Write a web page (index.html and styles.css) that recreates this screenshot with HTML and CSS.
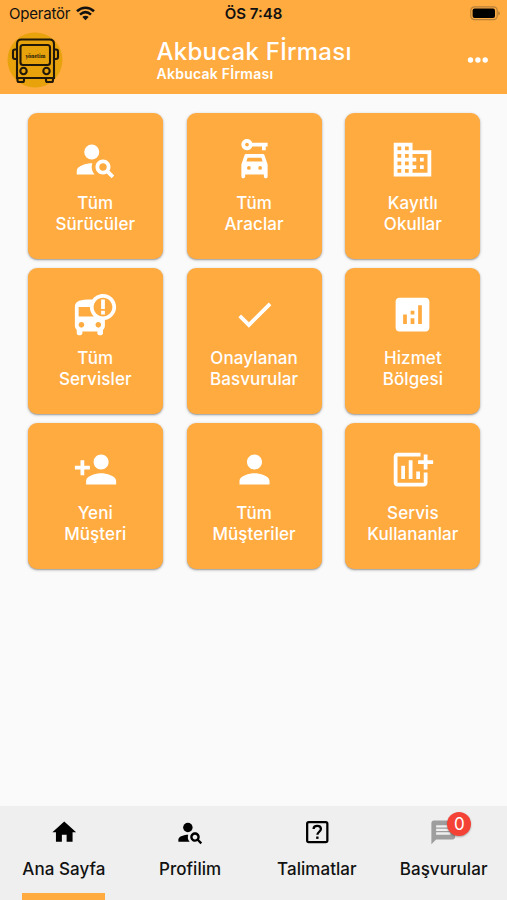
FILE: index.html
```html
<!DOCTYPE html>
<html lang="tr">
<head>
<meta charset="utf-8">
<title>Akbucak Fİrması</title>
<link rel="stylesheet" href="styles.css">
</head>
<body>
<div class="app">
  <header class="top">
    <div class="status">
      <div class="carrier">Operatör
        <svg width="19" height="15" viewBox="0 0 19 15" fill="none" stroke="#111" stroke-width="2.6"><path d="M1 5.2C6 .6 13 .6 18 5.2"/><path d="M4 8.6c3.400-3 7.600-3 11 0"/><path d="M9.500 14.200L6.300 11c1.900-1.700 4.500-1.700 6.400 0z" fill="#111" stroke="none"/></svg>
      </div>
      <div class="clock">ÖS 7:48</div>
      <svg class="battery" width="31" height="15" viewBox="0 0 31 15"><rect x=".8" y=".8" width="26.400" height="12.800" rx="3.600" fill="none" stroke="#b8813a" stroke-width="1.200"/><rect x="2.600" y="2.500" width="22.400" height="9.400" rx="2" fill="#000"/><path d="M28.400 5v4.600c1.900-.8 1.900-3.800 0-4.600z" fill="#a8752f"/></svg>
    </div>
    <div class="bar">
      <svg class="logo" width="56" height="56" viewBox="0 0 56 56">
        <circle cx="28" cy="28" r="27.500" fill="#e8a20c"/>
        <g fill="none" stroke="#21180a" stroke-width="2.1">
          <path d="M10 46V12q0-4.500 4.500-4.500h28q4.500 0 4.500 4.500v34z"/>
          <rect x="13.500" y="13" width="29.500" height="20" rx="2.500"/>
          <path d="M9.500 17.500H8q-2 0-2 2v5.500q0 2 2 2h1.500M47 17.500h2q2 0 2 2v5.500q0 2-2 2h-2"/>
          <circle cx="16.500" cy="39" r="3.200"/><circle cx="39.500" cy="39" r="3.200"/>
          <path d="M10.500 46v2.500q0 1.500 1.500 1.500h3.500q1.500 0 1.500-1.500v-2.500M39 46v2.500q0 1.500 1.500 1.500h4q1.500 0 1.500-1.500v-2.500"/>
        </g>
        <text x="28.500" y="25.500" text-anchor="middle" textLength="20" lengthAdjust="spacingAndGlyphs" class="logo-text">yönetim</text>
      </svg>
      <div class="titles">
        <h1>Akbucak Fİrması</h1>
        <p>Akbucak Fİrması</p>
      </div>
      <svg class="more" width="22" height="8" viewBox="0 0 22 8" fill="#fff"><circle cx="3.500" cy="4" r="2.700"/><circle cx="10.900" cy="4" r="2.700"/><circle cx="18.200" cy="4" r="2.700"/></svg>
    </div>
  </header>

  <main class="grid">
    <a class="card"><svg viewBox="0 0 24 24"><circle cx="10" cy="8" r="4"/><path d="M10.350 14.010C7.620 13.910 2 15.270 2 18v2h9.540c-2.470-2.760-1.230-5.890-1.190-5.990z"/><path d="M19.430 18.020c.36-.59.57-1.280.57-2.020 0-2.210-1.790-4-4-4s-4 1.790-4 4 1.790 4 4 4c.74 0 1.430-.22 2.020-.57L20.590 22 22 20.590l-2.570-2.570zM16 18c-1.100 0-2-.9-2-2s.9-2 2-2 2 .9 2 2-.9 2-2 2z"/></svg><span>Tüm<br>Sürücüler</span></a>
    <a class="card"><svg viewBox="0 0 24 24" fill-rule="evenodd"><path d="M10.830 3C10.410 1.830 9.300 1 8 1 6.340 1 5 2.340 5 4s1.340 3 3 3c1.300 0 2.410-.84 2.830-2H16v2h2V5h1V3zM8 5c-.55 0-1-.45-1-1s.45-1 1-1 1 .45 1 1-.45 1-1 1z"/><path d="M16.390 9H7.610c-.43 0-.81.28-.95.68L5 14.690V21c0 .55.45 1 1 1s1-.45 1-1v-1h10v1c0 .55.45 1 1 1s1-.45 1-1v-6.310l-1.660-5.010c-.14-.4-.52-.68-.95-.68zM7.670 13l.66-2h7.340l.66 2zM9 15.500a1 1 0 1 1 0 2 1 1 0 0 1 0-2zM15 15.500a1 1 0 1 1 0 2 1 1 0 0 1 0-2z"/></svg><span>Tüm<br>Araclar</span></a>
    <a class="card"><svg viewBox="0 0 24 24"><path d="M12 7V3H2v18h20V7H12zM6 19H4v-2h2v2zm0-4H4v-2h2v2zm0-4H4V9h2v2zm0-4H4V5h2v2zm4 12H8v-2h2v2zm0-4H8v-2h2v2zm0-4H8V9h2v2zm0-4H8V5h2v2zm10 12h-8v-2h2v-2h-2v-2h2v-2h-2V9h8v10zm-2-8h-2v2h2v-2zm0 4h-2v2h2v-2z"/></svg><span>Kayıtlı<br>Okullar</span></a>
    <a class="card"><svg viewBox="0 0 24 24" fill-rule="evenodd"><path d="M16 1c-2.400 0-4.520 1.210-5.760 3.020C9.840 4 9.420 4 9 4c-4.420 0-8 .5-8 4v10c0 .88.39 1.670 1 2.220V22c0 .55.45 1 1 1h1c.55 0 1-.45 1-1v-1h8v1c0 .55.45 1 1 1h1c.55 0 1-.45 1-1v-1.780c.61-.55 1-1.340 1-2.220v-3.080c3.390-.49 6-3.390 6-6.920 0-3.870-3.130-7-7-7zM4.500 19c-.83 0-1.500-.67-1.500-1.500S3.670 16 4.500 16s1.500.67 1.500 1.500S5.330 19 4.500 19zM3 13V8h6c0 1.960.81 3.730 2.110 5zM13.500 19c-.83 0-1.500-.67-1.500-1.500s.67-1.500 1.500-1.500 1.500.67 1.500 1.500-.67 1.500-1.500 1.500zM16 13c-2.760 0-5-2.240-5-5s2.240-5 5-5 5 2.240 5 5-2.240 5-5 5z"/><path d="M15 4h2v5h-2zM15 10h2v2h-2z"/></svg><span>Tüm<br>Servisler</span></a>
    <a class="card"><svg viewBox="0 0 24 24"><path d="M9 16.170L4.830 12l-1.420 1.410L9 19 21 7l-1.410-1.410z"/></svg><span>Onaylanan<br>Basvurular</span></a>
    <a class="card"><svg viewBox="0 0 24 24"><path d="M19 3H5c-1.100 0-2 .9-2 2v14c0 1.100.9 2 2 2h14c1.100 0 2-.9 2-2V5c0-1.100-.9-2-2-2zM9 17H7v-5h2v5zm4 0h-2v-3h2v3zm0-5h-2v-2h2v2zm4 5h-2V7h2v10z"/></svg><span>Hizmet<br>Bölgesi</span></a>
    <a class="card"><svg viewBox="0 0 24 24"><path d="M15 12c2.210 0 4-1.790 4-4s-1.790-4-4-4-4 1.790-4 4 1.790 4 4 4zm-9-2V7H4v3H1v2h3v3h2v-3h3v-2H6zm9 4c-2.670 0-8 1.340-8 4v2h16v-2c0-2.660-5.330-4-8-4z"/></svg><span>Yeni<br>Müşteri</span></a>
    <a class="card"><svg viewBox="0 0 24 24"><path d="M12 12c2.210 0 4-1.790 4-4s-1.790-4-4-4-4 1.790-4 4 1.790 4 4 4zm0 2c-2.670 0-8 1.340-8 4v2h16v-2c0-2.660-5.330-4-8-4z"/></svg><span>Tüm<br>Müşteriler</span></a>
    <a class="card"><svg viewBox="1 0 24 24"><path d="M17.300 3H5c-1.100 0-2 .9-2 2v14c0 1.100.9 2 2 2h14c1.100 0 2-.9 2-2v-5.400h-2V19H5V5h12.300zM7 10h2v7H7zM11 7h2v10h-2zM15 13h2v4h-2zM24 7v2h-3v3h-2V9h-3V7h3V4h2v3z"/></svg><span>Servis<br>Kullananlar</span></a>
  </main>

  <nav class="tabs">
    <a class="tab active"><svg viewBox="0 0 24 24"><path d="M10 20v-6h4v6h5v-8h3L12 3 2 12h3v8z"/></svg><span>Ana Sayfa</span></a>
    <a class="tab"><svg viewBox="0 0 24 24"><circle cx="10" cy="8" r="4"/><path d="M10.350 14.010C7.620 13.910 2 15.270 2 18v2h9.540c-2.470-2.760-1.230-5.890-1.190-5.990z"/><path d="M19.430 18.020c.36-.59.57-1.280.57-2.020 0-2.210-1.790-4-4-4s-4 1.790-4 4 1.790 4 4 4c.74 0 1.430-.22 2.020-.57L20.590 22 22 20.590l-2.570-2.570zM16 18c-1.100 0-2-.9-2-2s.9-2 2-2 2 .9 2 2-.9 2-2 2z"/></svg><span>Profilim</span></a>
    <a class="tab"><svg viewBox="0 0 24 24"><rect x="3.500" y="3.400" width="17" height="17" rx="1.400" fill="none" stroke="#000" stroke-width="1.900"/><path d="M8.900 9.300C9 5.700 15.100 5.900 15.100 9.300c0 2.100-3 2.500-3 4.900" fill="none" stroke="#000" stroke-width="1.900"/><rect x="11.100" y="15.600" width="2" height="2"/></svg><span>Talimatlar</span></a>
    <a class="tab"><div class="badged"><svg class="muted" viewBox="0 0 24 24"><path d="M20 2H4c-1.100 0-1.990.9-1.990 2L2 22l4-4h14c1.100 0 2-.9 2-2V4c0-1.100-.9-2-2-2zm-2 12H6v-2h12v2zm0-3H6V9h12v2zm0-3H6V6h12v2z"/></svg><b class="badge">0</b></div><span>Başvurular</span></a>
  </nav>
</div>
</body>
</html>
```
FILE: styles.css
```css
* { box-sizing: border-box; }
body {
  margin: 0;
  font-family: Inter, "Liberation Sans", sans-serif;
  background: #fafafa;
}
svg { display: block; flex: none; }
.app {
  width: 507px;
  height: 900px;
  display: flex;
  flex-direction: column;
  overflow: hidden;
}
.top { height: 94px; background: #ffab40; }
.status {
  height: 27px;
  display: grid;
  grid-template-columns: 1fr auto 1fr;
  align-items: center;
  padding: 0 6px 0 9px;
  color: #111;
  font-size: 15px;
}
.carrier { display: flex; align-items: center; gap: 6px; letter-spacing: -.2px; }
.clock { font-weight: 600; margin-left: -3px; }
.battery { justify-self: end; }
.bar {
  height: 67px;
  display: flex;
  align-items: center;
  padding: 0 18px 2px 7px;
}
.logo-text { font: 700 6px "DejaVu Serif", serif; fill: #21180a; }
.titles { flex: 1; margin-left: 93.500px; color: #fff; white-space: nowrap; }
h1 { margin: 1px 0 0; font-size: 24px; line-height: 28px; font-weight: 500; letter-spacing: .25px; }
p { margin: -1px 0 1px; font-size: 14px; line-height: 17px; font-weight: 600; letter-spacing: .25px; }
.grid {
  flex: 1;
  display: grid;
  grid-template-columns: repeat(3, 135px);
  grid-auto-rows: 146px;
  column-gap: 23.800px;
  row-gap: 9px;
  align-content: start;
  padding: 19.300px 0 0 27.800px;
}
.card {
  display: flex;
  flex-direction: column;
  align-items: center;
  padding-top: 24px;
  border-radius: 9px;
  background: #ffab40;
  box-shadow: 0 1px 3px rgba(0,0,0,.3), 0 1px 1px rgba(0,0,0,.14);
  color: #fff;
  font-size: 17px;
  line-height: 21px;
  font-weight: 500;
  letter-spacing: .1px;
  text-align: center;
}
.card svg { width: 45px; height: 45px; fill: #fff; margin-bottom: 11px; }
.tabs {
  height: 94px;
  display: grid;
  grid-template-columns: repeat(4, 1fr);
  justify-items: center;
  background: #efefef;
}
.tab {
  display: flex;
  flex-direction: column;
  align-items: center;
  padding-top: 12px;
  font-size: 17px;
  line-height: 22px;
  font-weight: 500;
  letter-spacing: .05px;
  color: #111;
  white-space: nowrap;
}
.tab svg { width: 28.500px; height: 28.500px; }
.tab span { margin-top: 11.500px; }
.active { border-bottom: 7px solid #ffab40; margin-left: 1px; }
.badged { position: relative; }
.muted { fill: #9e9e9e; }
.badge {
  position: absolute;
  left: 18px;
  top: -6px;
  width: 24px;
  height: 24px;
  border-radius: 50%;
  background: #f44336;
  box-shadow: 0 1px 2px rgba(0,0,0,.3);
  color: #fff;
  font-size: 17px;
  font-weight: 400;
  line-height: 24px;
  text-align: center;
}
```
